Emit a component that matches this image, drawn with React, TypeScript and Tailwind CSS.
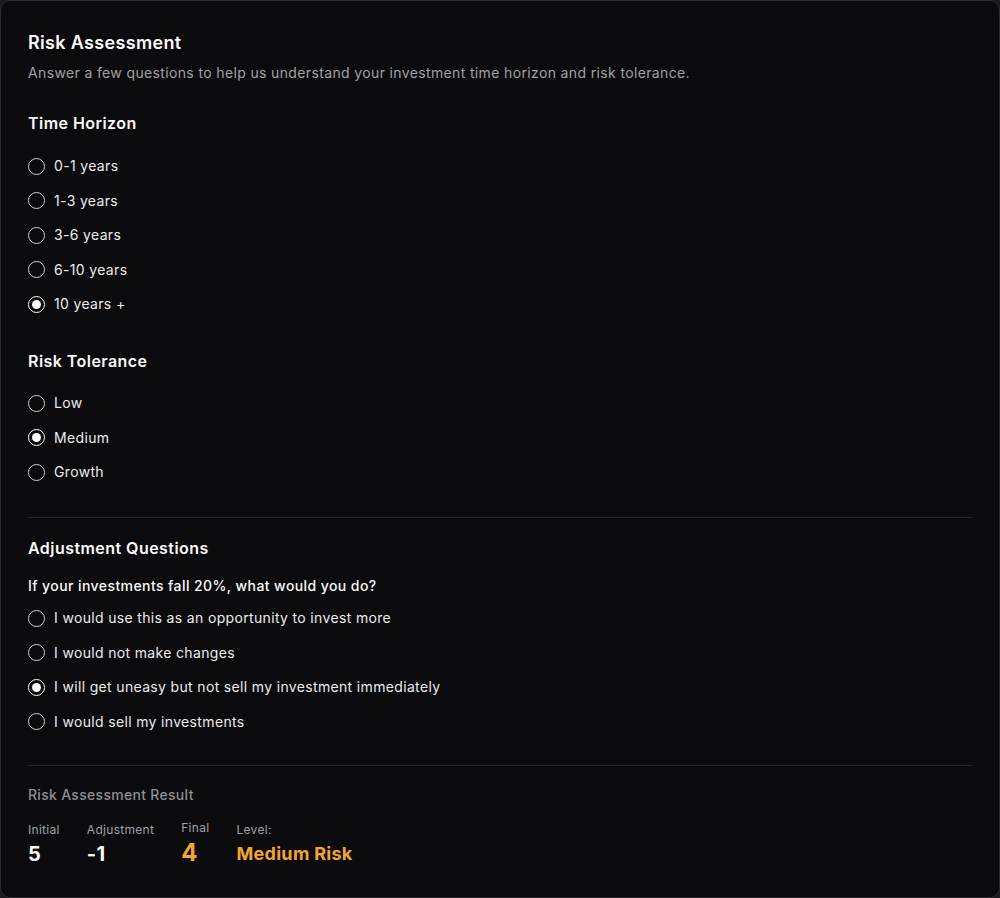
import React, { useState } from "react";

const timeOptions = ["0-1 years", "1-3 years", "3-6 years", "6-10 years", "10 years +"];
const riskOptions = ["Low", "Medium", "Growth"];
const adjustOptions = [
  "I would use this as an opportunity to invest more",
  "I would not make changes",
  "I will get uneasy but not sell my investment immediately",
  "I would sell my investments",
];

function Radio({ label, checked, onClick }: { label: string; checked: boolean; onClick: () => void }) {
  return (
    <button onClick={onClick} className="flex h-5 items-center gap-[9px] text-left">
      <span
        className={`flex h-[17px] w-[17px] items-center justify-center rounded-full border-[1.5px] ${
          checked ? "border-white" : "border-[#cfcfd2]"
        }`}
      >
        {checked && <span className="h-[9px] w-[9px] rounded-full bg-white" />}
      </span>
      <span className="text-sm tracking-[0.34px] text-[#ececee]">{label}</span>
    </button>
  );
}

export default function App() {
  const [time, setTime] = useState(4);
  const [risk, setRisk] = useState(1);
  const [adjust, setAdjust] = useState(2);

  return (
    <div className="min-h-screen bg-[#1c1c1e]" style={{ fontFamily: "Inter, 'Noto Sans', sans-serif" }}>
      <div className="h-[898px] rounded-[10px] border border-[#2c2c2f] bg-[#0b0b0d] px-[27px] pt-[28px]">
        {/* Header */}
        <h1 className="text-lg font-semibold leading-7 tracking-[0.33px] text-[#fafafa]">Risk Assessment</h1>
        <p className="mt-[6px] text-sm tracking-[0.36px] text-[#a1a1a6]">
          Answer a few questions to help us understand your investment time horizon and risk tolerance.
        </p>

        {/* Time Horizon */}
        <h2 className="mt-[28px] text-base font-semibold leading-6 tracking-[0.45px] text-[#fafafa]">Time Horizon</h2>
        <div className="mt-[21px] flex flex-col gap-[14.5px]">
          {timeOptions.map((o, i) => (
            <Radio key={o} label={o} checked={time === i} onClick={() => setTime(i)} />
          ))}
        </div>

        {/* Risk Tolerance */}
        <h2 className="mt-[35px] text-base font-semibold leading-6 tracking-[0.45px] text-[#fafafa]">Risk Tolerance</h2>
        <div className="mt-[20px] flex flex-col gap-[14.5px]">
          {riskOptions.map((o, i) => (
            <Radio key={o} label={o} checked={risk === i} onClick={() => setRisk(i)} />
          ))}
        </div>

        <div className="mt-[35px] h-px bg-[#27272a]" />

        {/* Adjustment */}
        <h2 className="mt-[18px] text-base font-semibold leading-6 tracking-[0.45px] text-[#fafafa]">
          Adjustment Questions
        </h2>
        <p className="mt-[16px] text-sm font-medium tracking-[0.42px] text-[#fafafa]">
          If your investments fall 20%, what would you do?
        </p>
        <div className="mt-[12px] flex flex-col gap-[14.5px]">
          {adjustOptions.map((o, i) => (
            <Radio key={o} label={o} checked={adjust === i} onClick={() => setAdjust(i)} />
          ))}
        </div>

        <div className="mt-[33px] h-px bg-[#27272a]" />

        {/* Result */}
        <p className="mt-[19px] text-sm font-medium tracking-[0.3px] text-[#8e8e93]">Risk Assessment Result</p>
        <div className="mt-[15px] flex items-end gap-[27px]">
          <div className="flex flex-col">
            <span className="text-xs tracking-[0.3px] text-[#a1a1a6]">Initial</span>
            <span className="mt-[2px] text-xl font-bold leading-7 text-[#fafafa]">5</span>
          </div>
          <div className="flex flex-col">
            <span className="text-xs tracking-[0.3px] text-[#a1a1a6]">Adjustment</span>
            <span className="mt-[2px] text-xl font-bold leading-7 tracking-[0.3px] text-[#fafafa]">-1</span>
          </div>
          <div className="flex flex-col">
            <span className="text-xs tracking-[0.3px] text-[#a1a1a6]">Final</span>
            <span className="mt-[2px] text-2xl font-bold leading-[30px] text-[#f0a535]">4</span>
          </div>
          <div className="flex flex-col">
            <span className="text-xs tracking-[0.3px] text-[#a1a1a6]">Level:</span>
            <span className="mt-[2px] text-lg font-bold leading-7 tracking-[0.3px] text-[#f0a535]">Medium Risk</span>
          </div>
        </div>
      </div>
    </div>
  );
}
